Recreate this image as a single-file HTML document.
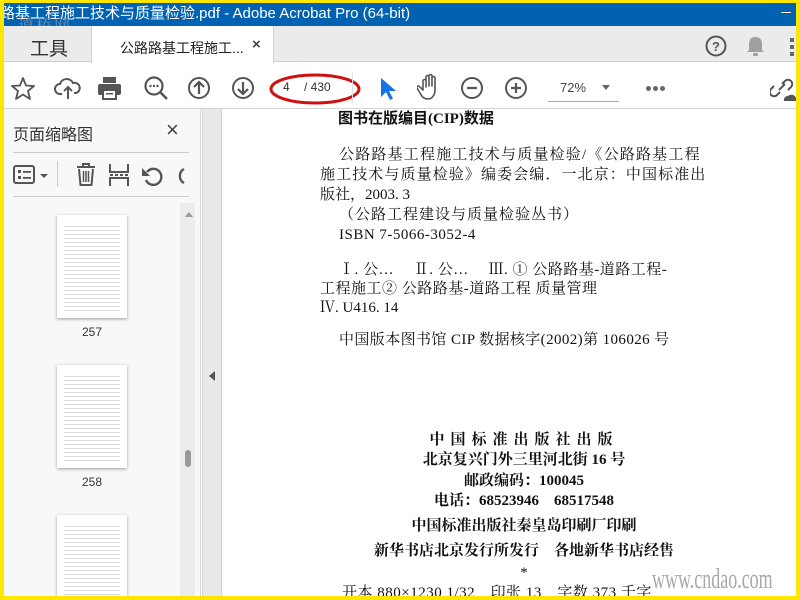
<!DOCTYPE html>
<html><head><meta charset="utf-8"><style>
*{margin:0;padding:0;box-sizing:border-box}
body{width:800px;height:600px;overflow:hidden;background:#ffe600;position:relative;font-family:"Liberation Sans","Noto Sans CJK SC",sans-serif}
.a{position:absolute}
.t{position:absolute;white-space:nowrap;font-family:"Liberation Serif","Noto Serif CJK SC",serif;font-size:15px;color:#111;line-height:18px}
.c{left:310px;width:420px;text-align:center}
</style></head><body>
<div class="a" style="left:4px;top:3px;width:792px;height:593px;background:#fff;overflow:hidden">
 <div class="a" style="left:-4px;top:0;width:800px;height:23px;background:#0062b1;color:#fff;font-size:15px;line-height:21px;white-space:nowrap">路基工程施工技术与质量检验.pdf - Adobe Acrobat Pro (64-bit)</div>
 <div class="a" style="left:14px;top:10px;color:#8a9ab0;font-size:16px;font-family:'Noto Serif CJK SC',serif;opacity:.8;letter-spacing:2px">道桥网</div>
 <div class="a" style="left:777px;top:9px;width:10px;height:1px;background:#fff"></div>
 <div class="a" style="left:0;top:23px;width:792px;height:36px;background:#ebebeb;border-bottom:1px solid #cfcfcf"></div>
 <div class="a" style="left:87px;top:23px;width:183px;height:37px;background:#fff;border-left:1px solid #d0d0d0;border-right:1px solid #d0d0d0"></div>
 <div class="a" style="left:26px;top:31px;font-size:19px;color:#333">工具</div>
 <div class="a" style="left:116px;top:35px;font-size:14px;color:#222">公路路基工程施工...</div>
 <div class="a" style="left:248px;top:33px;font-size:15px;color:#444;font-weight:bold">×</div>
 <svg class="a" style="left:701px;top:31px" width="24" height="24"><circle cx="11" cy="12" r="9.5" fill="none" stroke="#555" stroke-width="2"/><text x="11" y="17" font-size="13" text-anchor="middle" fill="#555" font-weight="bold" font-family="Liberation Sans">?</text></svg>
 <svg class="a" style="left:742px;top:32px" width="20" height="22"><path d="M9 2c-4 0-6 3-6 7v6l-2 2h17l-2-2V9c0-4-2-7-7-7z" fill="#a0a0a0"/><rect x="7" y="18" width="5" height="3" rx="1.5" fill="#a0a0a0"/></svg>
 <div class="a" style="left:786px;top:35px;width:4px;height:4px;background:#666;box-shadow:0 7px #666,0 14px #666"></div>
 <div class="a" style="left:0;top:105px;width:792px;height:1px;background:#d5d5d5"></div>
 <svg class="a" style="left:6px;top:72px" width="28" height="28"><path d="M13 3l3 7.5 8 .5-6 5 2 8-7-4.5-7 4.5 2-8-6-5 8-.5z" fill="none" stroke="#555" stroke-width="1.8" stroke-linejoin="round"/></svg>
 <svg class="a" style="left:50px;top:72px" width="28" height="26"><path d="M8 19H6a5 5 0 010-10 7 7 0 0113-1 5 5 0 013 10h-2" fill="none" stroke="#555" stroke-width="2"/><path d="M14 24V12M10 16l4-4 4 4" fill="none" stroke="#555" stroke-width="2"/></svg>
 <svg class="a" style="left:93px;top:73px" width="26" height="24"><rect x="6" y="1" width="13" height="6" fill="#555"/><rect x="1" y="8" width="23" height="11" rx="2" fill="#555"/><rect x="6" y="14" width="13" height="9" fill="#fff" stroke="#555" stroke-width="2"/><rect x="9" y="17" width="7" height="1.5" fill="#555"/></svg>
 <svg class="a" style="left:139px;top:72px" width="28" height="28"><circle cx="11" cy="11" r="8.5" fill="none" stroke="#555" stroke-width="2.2"/><path d="M17 17l7 7" stroke="#555" stroke-width="2.6"/><circle cx="7.5" cy="11" r="1.2" fill="#555"/><circle cx="11" cy="11" r="1.2" fill="#555"/><circle cx="14.5" cy="11" r="1.2" fill="#555"/></svg>
 <svg class="a" style="left:183px;top:73px" width="24" height="24"><circle cx="12" cy="12" r="10" fill="none" stroke="#555" stroke-width="2"/><path d="M12 18V6M7 11l5-5 5 5" fill="none" stroke="#555" stroke-width="2.2"/></svg>
 <svg class="a" style="left:227px;top:73px" width="24" height="24"><circle cx="12" cy="12" r="10" fill="none" stroke="#555" stroke-width="2"/><path d="M12 6v12M7 13l5 5 5-5" fill="none" stroke="#555" stroke-width="2.2"/></svg>
 <div class="a" style="left:279px;top:77px;font-size:12px;color:#333">4</div>
 <div class="a" style="left:300px;top:77px;font-size:12px;color:#333">/ 430</div>
 <svg class="a" style="left:264px;top:67px" width="96" height="38"><ellipse cx="47" cy="19" rx="44" ry="14" fill="none" stroke="#d01010" stroke-width="3"/></svg>
 <div class="a" style="left:348px;top:70px;width:1px;height:30px;background:#ddd"></div>
 <svg class="a" style="left:374px;top:73px" width="20" height="26"><path d="M3 2v19l5-5 4 8 3-1.5-4-7.5h7z" fill="#1473e6"/></svg>
 <svg class="a" style="left:413px;top:70px" width="26" height="30"><path d="M6 17V8a1.5 1.5 0 013 0v6V4a1.5 1.5 0 013 0v9V3a1.5 1.5 0 013 0v10V5a1.5 1.5 0 013 0v12c0 5-3 9-7 9s-6-2-8-6l-3-5a1.5 1.5 0 012.5-1.5z" fill="none" stroke="#555" stroke-width="1.6" stroke-linejoin="round"/></svg>
 <svg class="a" style="left:456px;top:73px" width="24" height="24"><circle cx="12" cy="12" r="10" fill="none" stroke="#555" stroke-width="2"/><path d="M7 12h10" stroke="#555" stroke-width="2.2"/></svg>
 <svg class="a" style="left:500px;top:73px" width="24" height="24"><circle cx="12" cy="12" r="10" fill="none" stroke="#555" stroke-width="2"/><path d="M7 12h10M12 7v10" stroke="#555" stroke-width="2.2"/></svg>
 <div class="a" style="left:556px;top:77px;font-size:13px;color:#444">72%</div>
 <div class="a" style="left:598px;top:82px;border-left:4px solid transparent;border-right:4px solid transparent;border-top:5px solid #666"></div>
 <div class="a" style="left:544px;top:98px;width:71px;height:1px;background:#aaa"></div>
 <div class="a" style="left:642px;top:83px;width:5px;height:5px;border-radius:50%;background:#666;box-shadow:7px 0 #666,14px 0 #666"></div>
 <svg class="a" style="left:766px;top:72px" width="26" height="28"><path d="M12 9l3-3a4 4 0 016 6l-3 3M10 17l-3 3a4 4 0 01-6-6l3-3M9 15l6-6" fill="none" stroke="#555" stroke-width="2"/><path d="M14 26a4 4 0 014-5 5 5 0 018 2v3z" fill="#555"/></svg>
 <div class="a" style="left:0;top:106px;width:197px;height:490px;background:#f8f8f8;border-right:1px solid #d6d6d6"></div>
 <div class="a" style="left:9px;top:118px;font-size:16px;color:#333">页面缩略图</div>
 <div class="a" style="left:162px;top:114px;font-size:22px;color:#444">×</div>
 <div class="a" style="left:9px;top:149px;width:176px;height:1px;background:#ccc"></div>
 <svg class="a" style="left:9px;top:161px" width="40" height="22"><rect x="1" y="2" width="20" height="17" rx="2" fill="none" stroke="#555" stroke-width="2"/><rect x="5" y="6" width="3" height="3" fill="#555"/><rect x="5" y="12" width="3" height="3" fill="#555"/><rect x="10" y="7" width="8" height="1.8" fill="#555"/><rect x="10" y="13" width="8" height="1.8" fill="#555"/><path d="M27 10h8l-4 4z" fill="#555"/></svg>
 <div class="a" style="left:53px;top:158px;width:1px;height:26px;background:#ccc"></div>
 <svg class="a" style="left:71px;top:160px" width="22" height="24"><path d="M2 4h18M8 4V1h6v3M4 6l1.5 16h11L18 6" fill="none" stroke="#555" stroke-width="2"/><path d="M8.5 8v11M11 8v11M13.5 8v11" stroke="#555" stroke-width="1.5"/></svg>
 <svg class="a" style="left:104px;top:160px" width="22" height="24"><path d="M2 1v8h18V1M2 23v-8h18v8" fill="none" stroke="#555" stroke-width="2"/><path d="M2 12h18" stroke="#555" stroke-width="2" stroke-dasharray="3 2"/></svg>
 <svg class="a" style="left:137px;top:161px" width="24" height="22"><path d="M6 8a8 8 0 11-1 8" fill="none" stroke="#555" stroke-width="2.4"/><path d="M1 4v8h8z" fill="#555"/></svg>
 <svg class="a" style="left:170px;top:161px" width="12" height="22"><path d="M10 5a8 8 0 000 14" fill="none" stroke="#555" stroke-width="2.4"/></svg>
 <div class="a" style="left:9px;top:193px;width:176px;height:1px;background:#ccc"></div>
 <div class="a" style="left:176px;top:200px;width:15px;height:396px;background:#ececec"></div>
 <div class="a" style="left:181px;top:209px;border-left:4px solid transparent;border-right:4px solid transparent;border-bottom:5px solid #999"></div>
 <div class="a" style="left:181px;top:447px;width:6px;height:17px;border-radius:3px;background:#999"></div>
 <div class="a" style="left:53px;top:212px;width:70px;height:103px;background:#fff;box-shadow:0 1px 3px #999;background-image:repeating-linear-gradient(#fff 0 3px,#ddd 3px 4px);background-size:56px 88px;background-repeat:no-repeat;background-position:7px 8px"></div>
 <div class="a" style="left:78px;top:322px;font-size:12px;color:#333">257</div>
 <div class="a" style="left:53px;top:362px;width:70px;height:103px;background:#fff;box-shadow:0 1px 3px #999;background-image:repeating-linear-gradient(#fff 0 3px,#ddd 3px 4px);background-size:56px 88px;background-repeat:no-repeat;background-position:7px 8px"></div>
 <div class="a" style="left:78px;top:472px;font-size:12px;color:#333">258</div>
 <div class="a" style="left:53px;top:512px;width:70px;height:90px;background:#fff;box-shadow:0 1px 3px #999;background-image:repeating-linear-gradient(#fff 0 3px,#ddd 3px 4px);background-size:56px 88px;background-repeat:no-repeat;background-position:7px 8px"></div>
 <div class="a" style="left:198px;top:106px;width:19px;height:490px;background:#e8e8e8;border-left:1px solid #d6d6d6"></div>
 <div class="a" style="left:205px;top:368px;border-top:5px solid transparent;border-bottom:5px solid transparent;border-right:6px solid #555"></div>
 <div class="a" style="left:217px;top:106px;width:1px;height:490px;background:#d0d0d0"></div>
 <div class="t" style="left:334px;top:107px;font-weight:bold;font-family:'Liberation Serif','Noto Sans CJK SC',sans-serif">图书在版编目(CIP)数据</div>
 <div class="t" style="left:335px;top:143px;letter-spacing:1.2px">公路路基工程施工技术与质量检验/《公路路基工程</div>
 <div class="t" style="left:316px;top:163px;letter-spacing:1.1px">施工技术与质量检验》编委会编．一北京：中国标准出</div>
 <div class="t" style="left:316px;top:183px">版社，2003. 3</div>
 <div class="t" style="left:335px;top:203px;letter-spacing:1px">（公路工程建设与质量检验丛书）</div>
 <div class="t" style="left:335px;top:223px;letter-spacing:.5px">ISBN 7-5066-3052-4</div>
 <div class="t" style="left:335px;top:258px;letter-spacing:.5px">Ⅰ. 公…　 Ⅱ. 公…　 Ⅲ. ① 公路路基-道路工程-</div>
 <div class="t" style="left:316px;top:277px;letter-spacing:.5px">工程施工② 公路路基-道路工程 质量管理</div>
 <div class="t" style="left:316px;top:296px">Ⅳ. U416. 14</div>
 <div class="t" style="left:335px;top:328px;letter-spacing:.4px">中国版本图书馆 CIP 数据核字(2002)第 106026 号</div>
 <div class="t c" style="top:428px;letter-spacing:6px;font-weight:bold">中国标准出版社出版</div>
 <div class="t c" style="top:448px;font-weight:bold">北京复兴门外三里河北街 16 号</div>
 <div class="t c" style="top:469px;font-weight:bold">邮政编码：100045</div>
 <div class="t c" style="top:489px;font-weight:bold">电话：68523946　68517548</div>
 <div class="t c" style="top:514px;font-weight:bold">中国标准出版社秦皇岛印刷厂印刷</div>
 <div class="t c" style="top:539px;font-weight:bold">新华书店北京发行所发行　各地新华书店经售</div>
 <div class="t c" style="top:561px">*</div>
 <div class="t" style="left:338px;top:581px;letter-spacing:.5px">开本 880×1230 1/32　印张 13　字数 373 千字</div>
 <div class="a" style="left:648px;top:560px;font-family:'Liberation Serif',serif;font-size:29px;color:#999;opacity:.85;transform:scaleX(.62);transform-origin:left;white-space:nowrap">www.cndao.com</div>
</div>
</body></html>
